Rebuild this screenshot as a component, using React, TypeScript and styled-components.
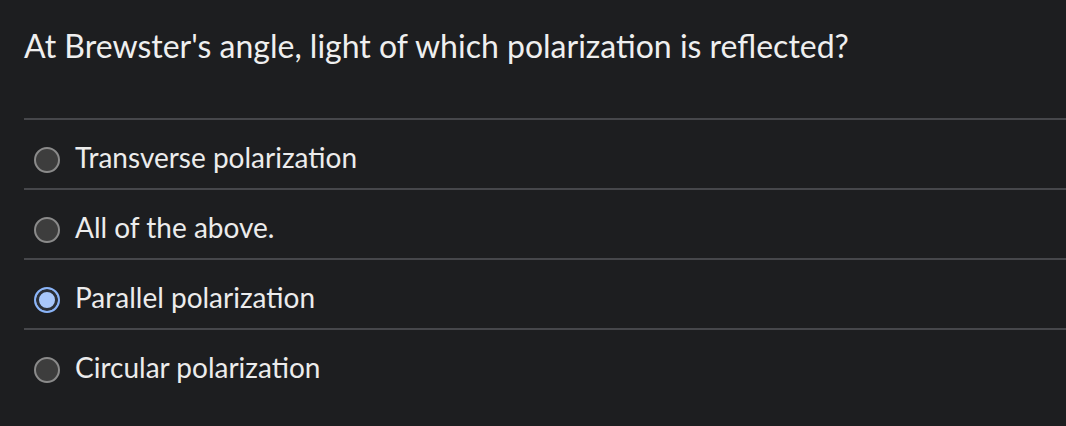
import React, { useState } from "react";
import styled, { createGlobalStyle } from "styled-components";

const GlobalStyle = createGlobalStyle`
  html, body {
    margin: 0;
    padding: 0;
    background: #1d1e20;
  }
  body {
    font-family: Lato, "Noto Sans", sans-serif;
    color: #ececec;
  }
`;

const options = [
  "Transverse polarization",
  "All of the above.",
  "Parallel polarization",
  "Circular polarization",
];

const App = () => {
  const [selected, setSelected] = useState(2);

  return (
    <>
      <GlobalStyle />
      <Wrapper>
        <Question>
          At Brewster's angle, light of which polarization is reflected?
        </Question>
        <OptionList>
          {options.map((label, i) => (
            <Option key={label} onClick={() => setSelected(i)}>
              <Radio $checked={selected === i} />
              <Label>{label}</Label>
            </Option>
          ))}
        </OptionList>
      </Wrapper>
    </>
  );
};

const Wrapper = styled.div`
  padding: 0 0 0 24px;
  min-height: 426px;
  box-sizing: border-box;
`;

const Question = styled.h1`
  margin: 0;
  padding: 26px 0 0;
  height: 118px;
  box-sizing: border-box;
  font-size: 32px;
  font-weight: 400;
  line-height: 40px;
  color: #efefef;
`;

const OptionList = styled.div`
  display: flex;
  flex-direction: column;
`;

const Option = styled.label`
  display: flex;
  align-items: center;
  gap: 15px;
  height: 70px;
  box-sizing: border-box;
  padding: 5px 0 0 10px;
  border-top: 2px solid #46474b;
  cursor: pointer;
`;

const Radio = styled.span<{ $checked: boolean }>`
  flex: none;
  width: 26px;
  height: 26px;
  margin-top: 7px;
  box-sizing: border-box;
  border-radius: 50%;
  border: 2px solid ${(p) => (p.$checked ? "#8ab4f8" : "#8a8a8a")};
  background: ${(p) => (p.$checked ? "#a8c7fa" : "#3d3d3d")};
  box-shadow: ${(p) => (p.$checked ? "inset 0 0 0 3px #2b3038" : "none")};
`;

const Label = styled.span`
  font-size: 28px;
  line-height: 34px;
  color: #ececec;
`;

export default App;
